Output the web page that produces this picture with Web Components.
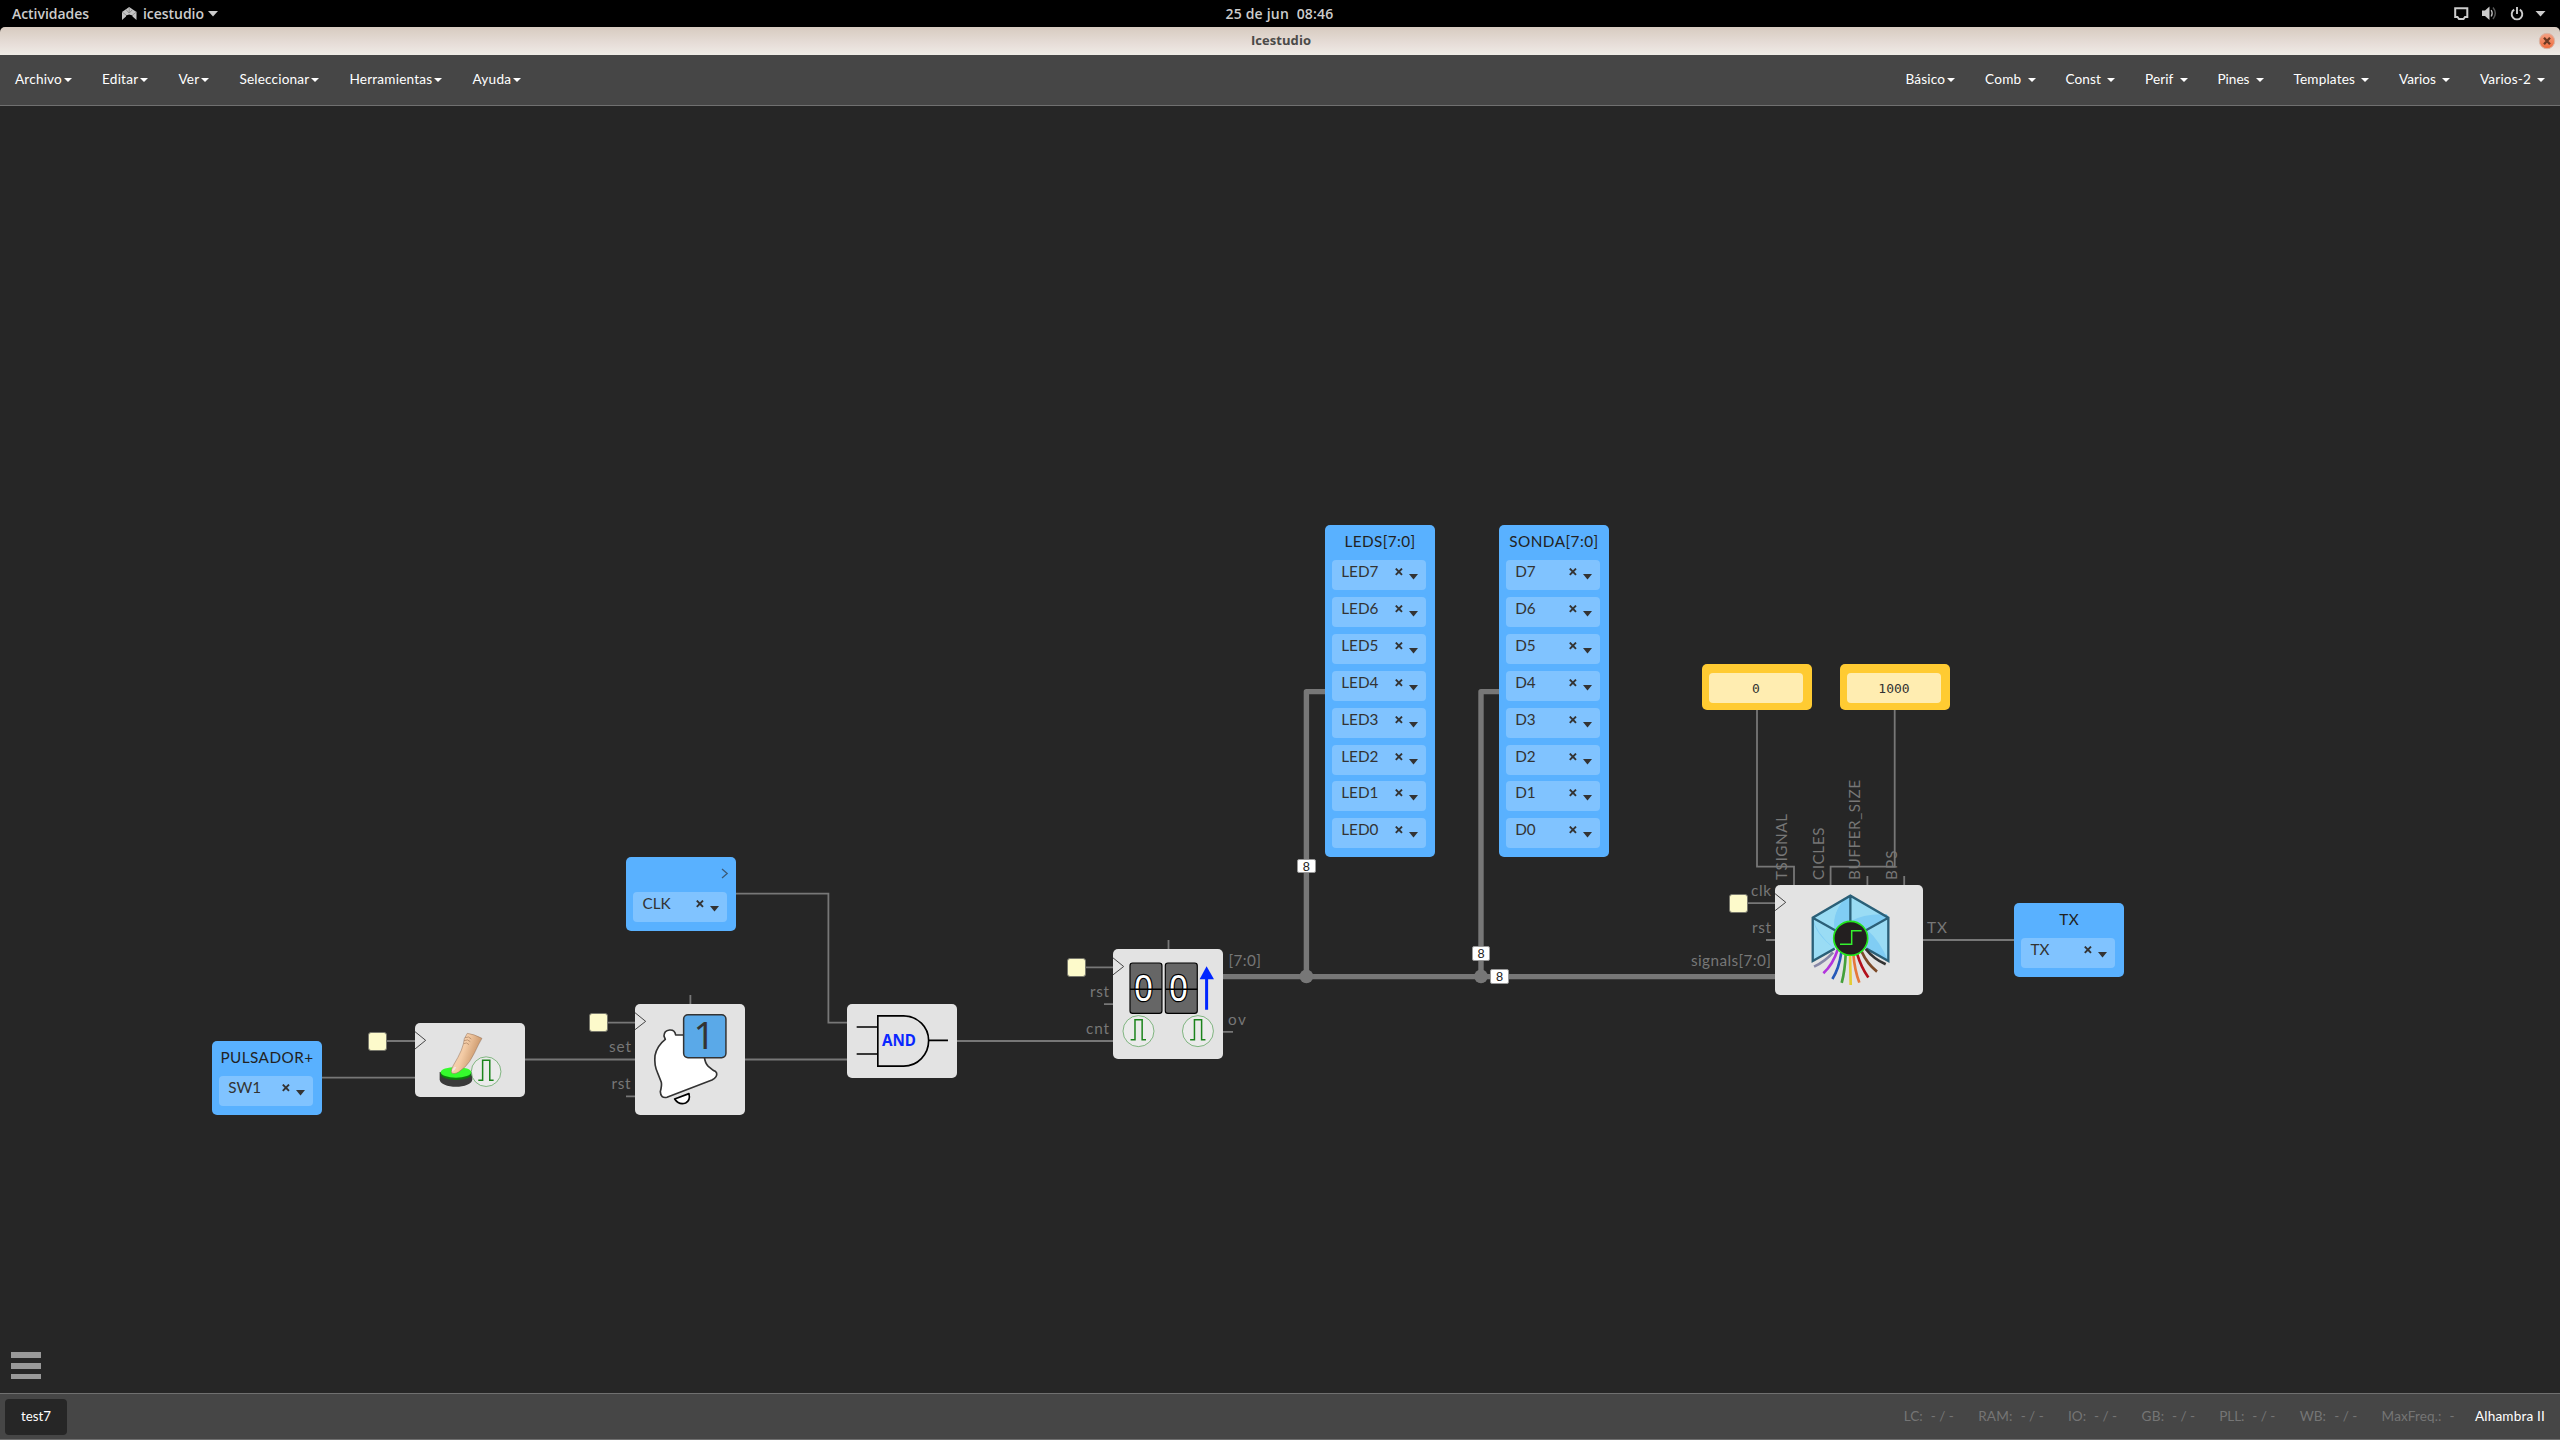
<!DOCTYPE html>
<html lang="es">
<head>
<meta charset="utf-8">
<title>Icestudio</title>
<style>
html,body{margin:0;height:100%;background:#262626;overflow:hidden}
body{font-family:Lato,"Liberation Sans",sans-serif}
</style>
</head>
<body>
<ice-app></ice-app>
<script>
function define(name, html, setup) {
  const t = document.createElement('template');
  t.innerHTML = html;
  customElements.define(name, class extends HTMLElement {
    connectedCallback() {
      if (this.shadowRoot) return;
      this.attachShadow({mode: 'open'}).append(t.content.cloneNode(true));
      if (setup) setup(this, this.shadowRoot);
    }
  });
}
const place = (el) => {
  for (const [a, p] of [['x', 'left'], ['w', 'width'], ['h', 'height']])
    if (el.hasAttribute(a)) el.style[p] = el.getAttribute(a) + 'px';
  el.style.top = (el.getAttribute('y') - 106) + 'px';
};

/* One line of text; "w" tunes the tracking so that the run has this width. */
define('ui-label', `<style>:host{display:inline-block;white-space:pre}span{display:inline-block}</style><span><slot></slot></span>`, (el, r) => {
  const w = +el.getAttribute('w');
  if (!w) return;
  const span = r.querySelector('span'), n = [...el.textContent].length;
  const cur = span.getBoundingClientRect().width;
  span.style.letterSpacing = (w - cur) / n + 'px';
  el.style.width = w + 'px';
});

define('top-bar', `<style>
:host{display:flex;height:27px;background:#000;color:#ccc;font:600 14px/27px "Open Sans","Noto Sans",sans-serif;align-items:center;justify-content:space-between}
div{display:flex;align-items:center;flex:1}
.l{padding-left:12px}.c{justify-content:center;padding-left:1px}.r{justify-content:flex-end;padding-right:14px}
svg{display:block}
</style>
<div class="l"><ui-label w="77">Actividades</ui-label>
<svg width="15" height="13" style="margin:0 6px 0 33px"><path d="M0 13V5L7.2 0 14.5 5V13L10.500 9.500V8.500L7.2 7.500 4 8.500V9.500Z" fill="#c4c4c4"/><path d="M7.2 0V6M0 5l4 3M14.5 5l-4 3M4 2.5l3 3.5M10.5 2.5L7.3 6" stroke="#777" stroke-width=".7"/></svg>
<ui-label w="61">icestudio</ui-label>
<svg width="10" height="6" style="margin-left:4px"><path d="M0 0H10L5 5.5Z" fill="#ccc"/></svg></div>
<div class="c"><ui-label w="108">25 de jun  08:46</ui-label></div>
<div class="r">
<svg width="15" height="13" style="margin-right:13px"><path d="M1.2 1.2H13.3V10H11L9.5 12H5L3.5 10H1.2Z" fill="none" stroke="#ccc" stroke-width="2"/></svg>
<svg width="16" height="15" style="margin-right:12px"><path d="M0 4.5H3L7.5 .5V14L3 10H0Z" fill="#ccc"/><path d="M9.2 4q2 3.3 0 6.5" fill="none" stroke="#bbb" stroke-width="1.3"/><path d="M11 1.5q4.6 5.7 0 11.5" fill="none" stroke="#555" stroke-width="1.5"/></svg>
<svg width="14" height="14" style="margin-right:11px"><path d="M4.2 2.6A5.3 5.3 0 1 0 9.8 2.6M7 0V7" fill="none" stroke="#ccc" stroke-width="1.9"/></svg>
<svg width="11" height="6"><path d="M.5 0H10.5L5.5 5.5Z" fill="#ccc"/></svg></div>`);

define('title-bar', `<style>
:host{display:block;height:28px;background:#000}
div{height:28px;display:grid;grid-template-columns:1fr auto 1fr;align-items:center;border-radius:5px 5px 0 0;background:linear-gradient(#d7cbc0,#e8dfda 65%,#efece6);color:#4b4a48;font:bold 13px/27px "Open Sans","Noto Sans",sans-serif}
svg{grid-column:3;justify-self:end;margin-right:4px}ui-label{grid-column:2;margin-left:2px;height:28px}
</style><div><ui-label w="60"><slot></slot></ui-label>
<svg width="18" height="18"><defs><linearGradient id="g" x2="0" y2="1"><stop stop-color="#f4a184"/><stop offset="1" stop-color="#ee6a3a"/></linearGradient></defs><circle cx="9" cy="9" r="7.7" fill="url(#g)" stroke="#d9b5a5"/><path d="M6 5.8L12 12.2M12 5.8L6 12.2" stroke="#6d3a22" stroke-width="2.3"/></svg></div>`, (el, r) => {
  const l = document.createElement('ui-label');
  l.setAttribute('w', 60);
  l.textContent = el.textContent;
  r.querySelector('ui-label').replaceWith(l);
});

define('menu-item', `<style>
:host{display:flex;align-items:center;gap:var(--gap,2px);padding:0 15px}
i{width:0;height:0;border:4px solid transparent;border-top-color:#fff;border-bottom:0;margin-top:2px}
</style><ui-label></ui-label><i></i>`, (el, r) => {
  const l = document.createElement('ui-label');
  l.setAttribute('w', el.getAttribute('w'));
  l.textContent = el.textContent;
  r.querySelector('ui-label').replaceWith(l);
});

define('menu-bar', `<style>
:host{display:flex;justify-content:space-between;height:50px;background:#464646;border-bottom:1px solid #707070;color:#fff;font-size:13.6px;line-height:48px}
nav{display:flex;height:48px}.wide{--gap:6px}
</style>
<nav><menu-item w="47">Archivo</menu-item><menu-item w="36.4">Editar</menu-item><menu-item w="21">Ver</menu-item><menu-item w="70">Seleccionar</menu-item><menu-item w="83">Herramientas</menu-item><menu-item w="39">Ayuda</menu-item></nav>
<nav><menu-item w="39.5">Básico</menu-item><menu-item class="wide" w="36.5">Comb</menu-item><menu-item class="wide" w="35.5">Const</menu-item><menu-item class="wide" w="28.5">Perif</menu-item><menu-item class="wide" w="32">Pines</menu-item><menu-item class="wide" w="61.5">Templates</menu-item><menu-item class="wide" w="37">Varios</menu-item><menu-item class="wide" w="51">Varios-2</menu-item></nav>`);

define('pin-field', `<style>
:host{display:flex;box-sizing:border-box;height:30px;margin-bottom:6.86px;border-radius:4px;background:#80c3ff;color:#333;font-size:15.3px;line-height:23px;padding:0 8px 0 9.500px}
ui-label{flex:1}
svg{display:block;margin-top:8px}
</style><ui-label><slot></slot></ui-label>
<svg width="24" height="13"><path d="M1.8 .6L8 6.8M8 .6L1.8 6.8" stroke="#333" stroke-width="1.9"/><path d="M15 6H24L19.5 11.6Z" fill="#333"/></svg>`);

define('io-block', `<style>
:host{display:block;position:absolute;box-sizing:border-box;border-radius:5px;background:#59b1ff;padding:0 9px 0 7px;color:#222}
header{height:35px;line-height:32px;font-size:15.3px;margin:0 -9px 0 -7px;display:flex;justify-content:center}
svg{margin:11px 7px 0 auto}
</style><header></header><slot></slot>`, (el, r) => {
  place(el);
  const h = r.querySelector('header');
  if (el.hasAttribute('clock'))
    h.innerHTML = '<svg width="8" height="11"><path d="M1 1L6.2 5.5 1 10" fill="none" stroke="#3c5b78" stroke-width="1.3"/></svg>';
  else
    h.innerHTML = `<ui-label w="${el.getAttribute('lw')}">${el.getAttribute('label')}</ui-label>`;
});

define('const-block', `<style>
:host{display:flex;position:absolute;box-sizing:border-box;width:110.6px;height:46.3px;padding:9.3px 9px 7px 7px;border-radius:5px;background:#ffcb32}
div{flex:1;border-radius:4px;background:#ffedb1;color:#333;text-align:center;font:13px/32px "DejaVu Sans Mono","Liberation Mono",monospace}
</style><div><slot></slot></div>`, place);

define('logic-block', `<style>
:host{display:block;position:absolute;box-sizing:border-box;border-radius:5px;background:#e3e3e3;overflow:hidden}
::slotted(svg){display:block;width:100%;height:100%}
</style><slot></slot>`, place);

define('net-badge', `<style>
:host{display:block;position:absolute;width:18.5px;height:14.4px;box-sizing:border-box;background:#fff;border:.5px solid #999;border-radius:2px;color:#222;text-align:center;font:12.8px/13px "Liberation Sans",sans-serif}
</style><slot></slot>`, place);

define('clock-mark', `<style>
:host{display:block;position:absolute;width:19px;height:19px;box-sizing:border-box;background:#fdfacb;border:1px solid #77776c;border-radius:3px}
</style>`, place);

define('wire-layer', `<style>
:host{display:block;width:100%;height:100%}
svg{display:block;width:100%;height:100%}
.w{fill:none;stroke:#777;stroke-width:1.8}
.b{fill:none;stroke:#777;stroke-width:5.4;stroke-linejoin:round}
text{font:15.3px Lato,sans-serif;fill:#777}
</style>
<svg viewBox="0 106 2560 1287">
<path class="w" d="M322 1077.7H415M387 1041H415M525 1059.5H635M608 1022.6H635M626 1096.3H635M690.4 995V1004M745 1059.5H847M736 893.7H828.4V1022.6H847M957 1041H1113M1104 1004.2H1113M1168.5 940V949M1086 967.4H1113M1223 1031.8H1233M1757 710V866.6H1794V885M1894.7 710V866.6H1830.6V885M1867.4 876V885M1904.2 876V885M1748 903.2H1775M1766 940H1775M1923 940H2014"/>
<path class="b" d="M1223 976.6H1775M1325 691.6H1306.4V976.6M1499 691.6H1481V976.6"/>
<circle cx="1306.4" cy="976.4" r="6.8" fill="#777"/><circle cx="1481" cy="976.4" r="6.8" fill="#777"/>
<text x="609" y="1052" textLength="22">set</text><text x="611.5" y="1089" textLength="19">rst</text>
<text x="1090" y="997" textLength="19">rst</text><text x="1086" y="1034" textLength="23">cnt</text>
<text x="1228.4" y="965.5" textLength="32.5">[7:0]</text><text x="1228" y="1025.3" textLength="18">ov</text>
<text x="1751" y="896" textLength="20">clk</text><text x="1752" y="933" textLength="19">rst</text>
<text x="1691" y="966" textLength="80">signals[7:0]</text><text x="1927" y="933" textLength="20">TX</text>
<text transform="translate(1787 880)rotate(-90)" textLength="66">TSIGNAL</text>
<text transform="translate(1824 880)rotate(-90)" textLength="52.5">CICLES</text>
<text transform="translate(1860 880)rotate(-90)" textLength="100">BUFFER_SIZE</text>
<text transform="translate(1896.8 880)rotate(-90)" textLength="29.5">BPS</text>
</svg>`);

const field = (names) => names.map(n => `<pin-field>${n}</pin-field>`).join('');
const pulse = 'M-23.5 26H-10.5V-34H11V26H22.5';
define('design-canvas', `<style>
:host{display:block;position:relative;min-height:0;background:#262626;overflow:hidden}
.burger{position:absolute;left:11px;bottom:14px;display:flex;flex-direction:column;gap:5px}
.burger i{width:30px;height:6px;background:#999}
.burger i:last-child{height:5px}
</style>
<wire-layer></wire-layer>
<io-block x="211.7" y="1041" w="110.6" h="73.8" label="PULSADOR+" lw="93"><pin-field>SW1</pin-field></io-block>
<io-block x="626" y="857.2" w="110.3" h="73.8" clock><pin-field>CLK</pin-field></io-block>
<io-block x="1324.7" y="525.3" w="110.6" h="331.4" label="LEDS[7:0]" lw="71">${field([7,6,5,4,3,2,1,0].map(i => 'LED' + i))}</io-block>
<io-block x="1498.7" y="525.3" w="110.6" h="331.4" label="SONDA[7:0]" lw="89.5">${field([7,6,5,4,3,2,1,0].map(i => 'D' + i))}</io-block>
<io-block x="2014" y="903.2" w="110.3" h="73.8" label="TX" lw="20"><pin-field>TX</pin-field></io-block>
<const-block x="1701.7" y="663.7">0</const-block>
<const-block x="1839.7" y="663.7">1000</const-block>
<clock-mark x="368.4" y="1031.5"></clock-mark><clock-mark x="589" y="1013.2"></clock-mark>
<clock-mark x="1067.2" y="958"></clock-mark><clock-mark x="1729" y="893.5"></clock-mark>

<logic-block x="414.7" y="1023" w="110.6" h="73.8"><svg viewBox="14 99 332 221.4">
<defs><linearGradient id="skin" x1="0" y1="0" x2="1" y2=".45"><stop stop-color="#f9dcc3"/><stop offset=".5" stop-color="#f3cba5"/><stop offset="1" stop-color="#c18a5c"/></linearGradient></defs>
<path d="M14 125L46 151 14 177" fill="none" stroke="#444" stroke-width="3"/>
<path d="M88 246V268C88 298 186 298 186 268V246Z" fill="#3a3a3a"/>
<ellipse cx="137" cy="252" rx="46" ry="18" fill="#0c7a0c"/><ellipse cx="137" cy="247" rx="46" ry="16" fill="#35fb2d"/>
<path d="M171 130Q190 132 215 145Q205 162 192 190Q178 218 165 230L145 246Q130 254 124 248Q121 240 128 228Q145 200 153 181Q161 160 162 146Z" fill="url(#skin)" stroke="#8d6e58" stroke-width="1.5"/>
<path d="M164 143q12-6 19 4M161 152q12-6 19 3M160 161q10-6 16 3" fill="none" stroke="#a57b5c" stroke-width="2"/>
<path d="M124 246q2-10 9-16l5 2q-6 12-14 14Z" fill="#f5e3e3"/>
<g transform="translate(227.5 245)"><circle r="44.5" fill="#ebebeb" stroke="#4b9c4b" stroke-width="2"/><path d="${pulse}" fill="none" stroke="#1c841c" stroke-width="4.5"/></g>
</svg></logic-block>

<logic-block x="634.7" y="1003.5" w="110.6" h="111"><svg viewBox="674 41 332 333">
<path d="M674 67L706 93 674 118" fill="none" stroke="#444" stroke-width="3"/>
<path d="M822 134H796Q794 118 778 119Q761 121 761 137L765 147Q740 166 734 196Q731 225 742 248L753 276Q755 285 750 304Q751 325 770 321L905 269Q922 260 919 248Q917 242 909 240L894 228Q884 218 882 198" fill="#fff" stroke="#333" stroke-width="5" stroke-linejoin="round"/>
<path d="M793 326L836 310Q841 330 826 338Q806 345 793 326Z" fill="#fff" stroke="#000" stroke-width="5" stroke-linejoin="round"/>
<rect x="820" y="73" width="127" height="129" rx="13" fill="#5aa9e8" stroke="#333" stroke-width="4.5"/>
<text x="850" y="177" font-size="113" font-family="Noto Sans,sans-serif" fill="#333">1</text>
</svg></logic-block>

<logic-block x="846.7" y="1004" w="110.3" h="73.8"><svg viewBox="320 252 331 221.4">
<path d="M412.5 287.5H490C532 288 565 320 565 361.5C565 404 532 438 490 438.5H412.5ZM349 321H412M349 402H412M565 361H623" fill="none" stroke="#000" stroke-width="5"/>
<text x="425" y="377" font-size="46" font-weight="bold" font-family="Noto Sans,sans-serif" fill="#0a28ff" textLength="102" lengthAdjust="spacingAndGlyphs">AND</text>
</svg></logic-block>

<logic-block x="1112.8" y="948.5" w="110.6" h="110.8"><svg viewBox="38 55.5 332 332.5">
<path d="M38 82L70 108 38 133" fill="none" stroke="#444" stroke-width="3"/>
<g fill="#666" stroke="#000" stroke-width="3.5"><rect x="89" y="97.5" width="96" height="151" rx="8"/><rect x="195" y="97.5" width="96" height="151" rx="8"/></g>
<g font-family="Noto Sans,sans-serif" font-size="109" fill="#fff" stroke="#000" stroke-width="8" paint-order="stroke" stroke-linejoin="round"><text x="101" y="213" textLength="57" lengthAdjust="spacingAndGlyphs">0</text><text x="206" y="213" textLength="57" lengthAdjust="spacingAndGlyphs">0</text></g>
<path d="M89 176H185M195 176H291" stroke="#000" stroke-width="4.5"/>
<path d="M319 144V238" stroke="#0026ff" stroke-width="9"/><path d="M319 107L341 146H298Z" fill="#0026ff"/>
<g transform="translate(114.5 302)"><circle r="46.5" fill="#ebebeb" stroke="#4b9c4b" stroke-width="2"/><path d="${pulse}" fill="none" stroke="#1c841c" stroke-width="4.5"/></g>
<g transform="translate(293 302)"><circle r="46.5" fill="#ebebeb" stroke="#4b9c4b" stroke-width="2"/><path d="${pulse}" fill="none" stroke="#1c841c" stroke-width="4.5"/></g>
</svg></logic-block>

<logic-block x="1775.3" y="884.7" w="147.4" h="110.6"><svg viewBox="-14 44 442 332">
<path d="M-14 70L18 96-14 121" fill="none" stroke="#444" stroke-width="3"/>
<path d="M212 76L326 142V272L212 208 99 272V142Z" fill="#9adcf4"/>
<path d="M196 86L212 76V208L99 142Q104 190 165 235L212 208Q150 165 196 86Z M99 142L165 180Q155 130 196 84L212 76V204L165 235Q110 190 99 142Z" fill="#80cdf4"/>
<path d="M160 176Q162 115 196 85L99 142Z" fill="#9adcf4"/>
<path d="M212 153Q255 128 322 132L326 142 262 178Q300 210 326 272L255 235 212 200Z" fill="#80cdf4"/>
<path d="M270 175L326 146V264Q310 205 270 175Z" fill="#9adcf4"/>
<path d="M165 235L99 272V142L212 76 326 142V272L260 235M212 76V160M99 142L170 182M326 142L255 182" fill="none" stroke="#2b6078" stroke-width="7"/>
<g fill="none" stroke-width="8"><path d="M160 246Q138 272 103 289" stroke="#8788a8"/><path d="M174 238Q160 282 131 309" stroke="#b234dc"/><path d="M185 246Q178 295 158 326" stroke="#2659b8"/><path d="M198 250Q196 300 186 338" stroke="#45a03a"/><path d="M211 252L213 344" stroke="#e3cc35"/><path d="M221 252Q225 300 239 337" stroke="#e5783c"/><path d="M232 250Q244 290 266 322" stroke="#b3101c"/><path d="M246 244Q262 280 292 304" stroke="#7c4a28"/><path d="M258 236Q282 266 318 282" stroke="#333"/></g>
<circle cx="213" cy="204" r="51" fill="#231f20" stroke="#22e61e" stroke-width="5"/>
<path d="M181 222H216V181H246" fill="none" stroke="#35f22f" stroke-width="4.5"/>
</svg></logic-block>

<net-badge x="1297" y="859">8</net-badge><net-badge x="1471.7" y="946.4">8</net-badge><net-badge x="1490.2" y="969.2">8</net-badge>
<div class="burger"><i></i><i></i><i></i></div>`);

define('stat-item', `<style>:host{display:flex;justify-content:space-between}</style>`, (el, r) => {
  const [name, value, nw, vw, w] = ['name', 'value', 'nw', 'vw', 'w'].map(a => el.getAttribute(a));
  el.style.width = w + 'px';
  r.innerHTML += `<ui-label w="${nw}">${name}</ui-label><ui-label w="${vw}">${value}</ui-label>`;
});

define('status-bar', `<style>
:host{display:flex;justify-content:space-between;box-sizing:border-box;height:47px;background:#464646;border-top:1px solid #707070;border-bottom:1px solid #707070;font-size:13.6px;line-height:45px;color:#757575}
.tab{margin:5px;width:62px;height:36px;line-height:35px;border-radius:4px;background:#262626;color:#fff;text-align:center;font-size:13.3px}
.stats{display:flex;gap:24.4px;padding-right:15px}.board{color:#fff;margin-left:-4px}
</style><div class="tab">test7</div>
<div class="stats"><stat-item name="LC:" value="- / -" nw="19" vw="23" w="50"></stat-item><stat-item name="RAM:" value="- / -" nw="34.5" vw="23" w="65.5"></stat-item><stat-item name="IO:" value="- / -" nw="18" vw="23" w="49"></stat-item><stat-item name="GB:" value="- / -" nw="23" vw="23" w="53.5"></stat-item><stat-item name="PLL:" value="- / -" nw="25" vw="23" w="56"></stat-item><stat-item name="WB:" value="- / -" nw="26" vw="23" w="57.5"></stat-item><stat-item name="MaxFreq.:" value="-" nw="60" vw="5" w="73"></stat-item><ui-label class="board" w="70">Alhambra II</ui-label></div>`);

define('ice-app', `<style>
:host{display:grid;grid-template-rows:auto auto auto 1fr auto;width:2560px;height:1440px}
</style><top-bar></top-bar><title-bar>Icestudio</title-bar><menu-bar></menu-bar><design-canvas></design-canvas><status-bar></status-bar>`);
</script>
</body>
</html>
